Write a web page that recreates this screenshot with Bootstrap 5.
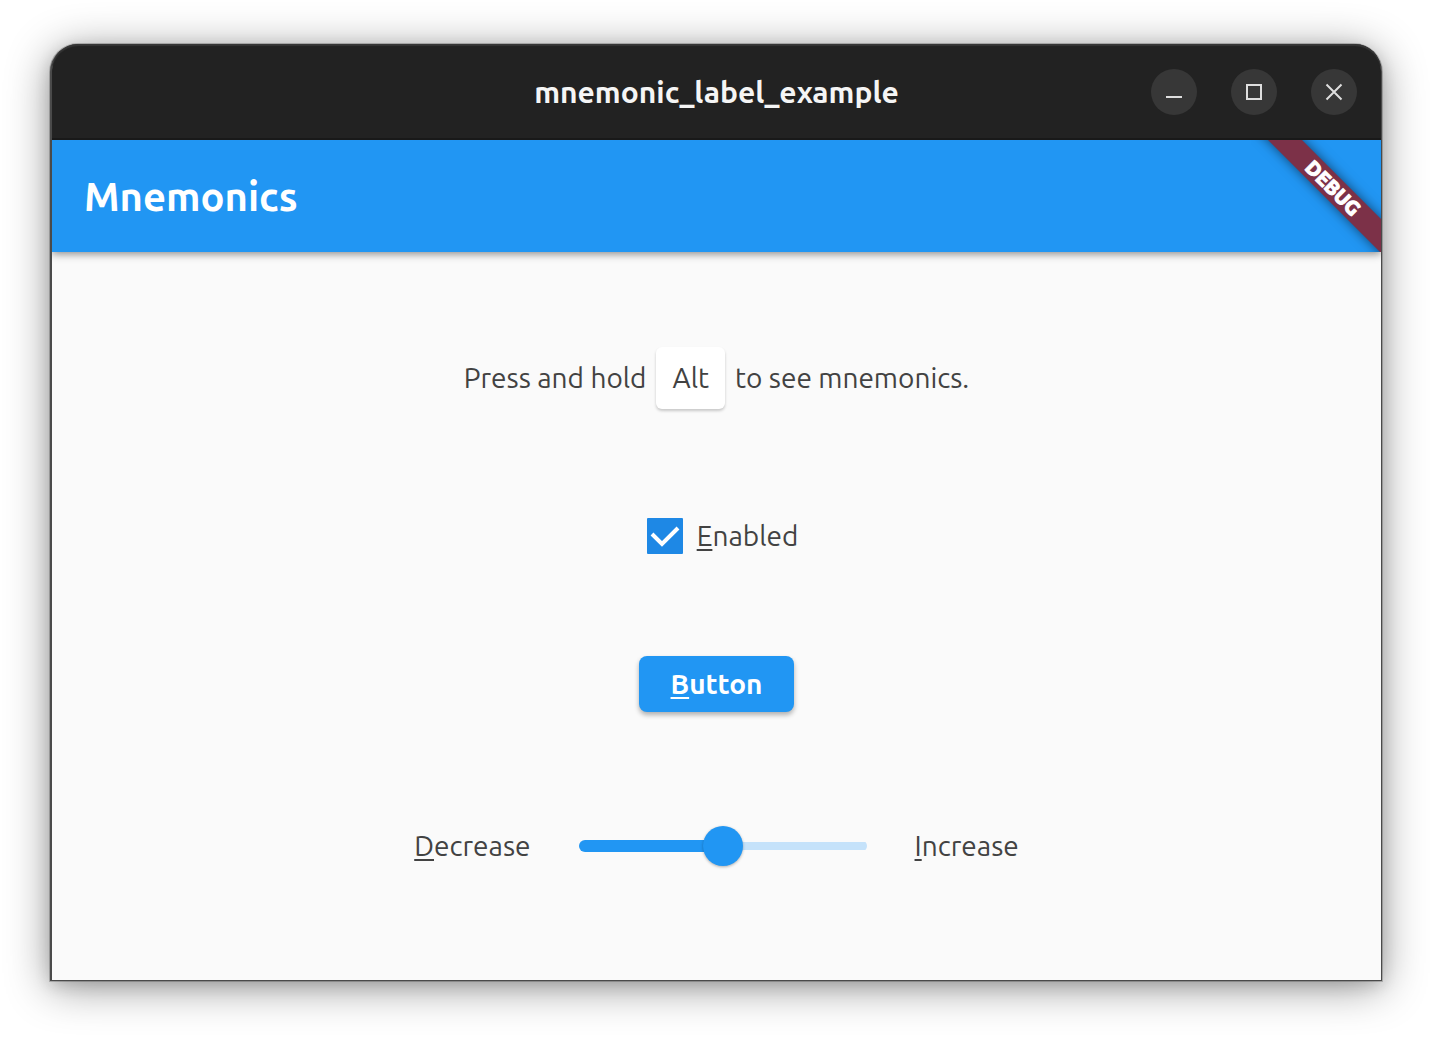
<!DOCTYPE html>
<html lang="en">
<head>
<meta charset="utf-8">
<meta name="viewport" content="width=device-width, initial-scale=1">
<title>mnemonic_label_example</title>
<link href="https://cdn.jsdelivr.net/npm/bootstrap@5.3.0/dist/css/bootstrap.min.css" rel="stylesheet">
<style>
  :root { --blue: #2196f3; --ink: #424242; }
  body { font-family: Ubuntu, "Noto Sans", sans-serif; font-size: 28px; line-height: 36px; color: var(--ink); background: #fff; }
  .desktop { padding: 44px 50px 57px; }
  .app-window { border: 1px solid #4a4a4a; border-top: 0; border-width: 0 1px 1px 2px; border-radius: 28px 28px 0 0; background: #fafafa;
    box-shadow: 0 0 0 1px rgba(0,0,0,.2), 0 6px 44px rgba(0,0,0,.42), 0 4px 16px rgba(0,0,0,.14); }
  .title-bar { height: 96px; background: #222; border-bottom: 2px solid #191919; border-radius: 26px 26px 0 0;
    box-shadow: inset 0 2px 1px #363636; padding: 2px 24px 0; display: grid; grid-template-columns: 1fr auto 1fr; align-items: center; }
  .title-bar h1 { font-size: 30px; line-height: 36px; color: #f5f5f5; }
  .win-btn { width: 46px; height: 46px; border: 0; border-radius: 50%; background: #373737; color: #dedede; padding: 0; }
  .win-group { gap: 34px; }
  .app-bar { height: 112px; background: var(--blue); padding: 2px 32px 0; box-shadow: 0 2px 8px rgba(0,0,0,.45); clip-path: inset(0 0 -20px 0); }
  .app-bar h2 { font-size: 40px; line-height: 48px; color: #fff; }
  .ribbon-clip { width: 130px; height: 112px; top: 0; right: 0; overflow: hidden; }
  .ribbon { width: 220px; height: 24px; right: -62px; top: 36px; transform: rotate(45deg); background: #7c3148;
    box-shadow: 0 0 12px rgba(0,0,0,.55); color: #fff; font-size: 20px; line-height: 24px; font-weight: 900; -webkit-text-stroke: 1px #fff; }
  .content-pane { gap: 100px; padding: 86px 16px 100px; }
  .hint-row { min-height: 80px; gap: 10px; }
  .key-cap { font: inherit; color: inherit; background: #fff; border-radius: 6px; padding: 13px 16px; box-shadow: 0 2px 3px rgba(0,0,0,.2); }
  .check-row { min-height: 36px; gap: 14px; padding-left: 12px; }
  .check-row .form-check-input { width: 36px; height: 36px; margin: 0; border: 0; border-radius: 1px; background-color: #fff; }
  .check-row .form-check-input:checked { background-color: #1e88e5; background-size: 100% 100%;
    background-image: url("data:image/svg+xml,%3csvg xmlns='http://www.w3.org/2000/svg' viewBox='0 0 36 36'%3e%3cpath fill='none' stroke='%23fff' stroke-width='4' d='M5 16l10 10L31 10'/%3e%3c/svg%3e"); }
  .button-row { min-height: 60px; }
  .btn-raised { --bs-btn-color: #fff; --bs-btn-bg: #2196f3; --bs-btn-hover-color: #fff; --bs-btn-hover-bg: #1e88e5;
    --bs-btn-padding-x: 32px; --bs-btn-padding-y: 10px; --bs-btn-border-width: 0; --bs-btn-border-radius: 8px;
    --bs-btn-font-size: 28px; --bs-btn-line-height: 36px; font-weight: 700; box-shadow: 0 3px 5px rgba(0,0,0,.3); }
  u { text-decoration-thickness: 2px; text-underline-offset: 3px; text-decoration-skip-ink: none; }
  .slider-row { min-height: 64px; gap: 48px; }
  .level { -webkit-appearance: none; appearance: none; width: 288px; height: 40px; background: none; margin: 0; }
  .level::-webkit-slider-runnable-track { height: 12px; border-radius: 6px;
    background: linear-gradient(var(--blue), var(--blue)) left / var(--fill) 12px no-repeat,
      linear-gradient(#c5e2fa, #c5e2fa) center / 100% 8px no-repeat; }
  .level::-webkit-slider-thumb { -webkit-appearance: none; width: 40px; height: 40px; margin-top: -14px; border: 0; border-radius: 50%;
    background: var(--blue); box-shadow: 0 1px 3px rgba(0,0,0,.3); }
</style>
<script src="https://cdn.jsdelivr.net/npm/bootstrap@5.3.0/dist/js/bootstrap.bundle.min.js"></script>
</head>
<body>
<div class="desktop min-vh-100 d-flex">
  <div class="app-window flex-grow-1 d-flex flex-column">
    <header class="title-bar">
      <span></span>
      <h1 class="fw-bold m-0">mnemonic_label_example</h1>
      <div class="win-group d-flex justify-content-end">
        <button type="button" class="win-btn d-flex" aria-label="Minimize"><svg width="46" height="46" viewBox="0 0 46 46"><path d="M15 28h16" stroke="currentColor" stroke-width="2"/></svg></button>
        <button type="button" class="win-btn d-flex" aria-label="Maximize"><svg width="46" height="46" viewBox="0 0 46 46"><path d="M16 16h14v14H16z" fill="none" stroke="currentColor" stroke-width="2"/></svg></button>
        <button type="button" class="win-btn d-flex" aria-label="Close"><svg width="46" height="46" viewBox="0 0 46 46"><path d="M15.500 15.500l15 15m0-15l-15 15" stroke="currentColor" stroke-width="2"/></svg></button>
      </div>
    </header>
    <div class="app-bar d-flex align-items-center position-relative z-1">
      <h2 class="fw-bold m-0">Mnemonics</h2>
      <div class="ribbon-clip position-absolute"><div class="ribbon position-absolute text-center">DEBUG</div></div>
    </div>
    <main class="content-pane flex-grow-1 d-flex flex-column align-items-center">
      <div class="hint-row d-flex align-items-center"><span>Press and hold</span><kbd class="key-cap">Alt</kbd><span>to see mnemonics.</span></div>
      <div class="check-row d-flex align-items-center">
        <input class="form-check-input" type="checkbox" id="enabled" accesskey="e" checked>
        <label for="enabled"><u>E</u>nabled</label>
      </div>
      <div class="button-row d-flex align-items-center"><button type="button" class="btn btn-raised" accesskey="b"><u>B</u>utton</button></div>
      <div class="slider-row d-flex align-items-center">
        <label for="level" id="dec"><u>D</u>ecrease</label>
        <input type="range" class="level" id="level" min="0" max="100" value="50" style="--fill: 50%">
        <label for="level" id="inc"><u>I</u>ncrease</label>
      </div>
    </main>
  </div>
</div>
</body>
</html>
